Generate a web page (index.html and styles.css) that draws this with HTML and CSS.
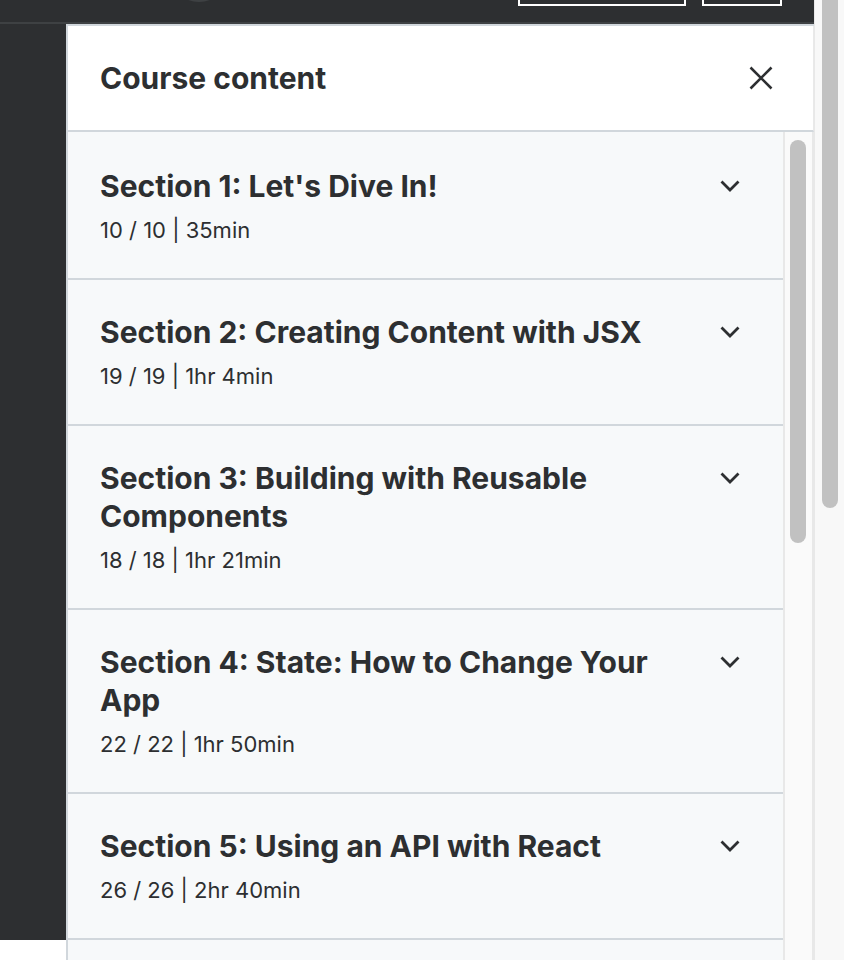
FILE: index.html
```html
<!DOCTYPE html>
<html lang="en">
<head>
<meta charset="utf-8">
<title>Course content</title>
<link rel="stylesheet" href="styles.css">
</head>
<body>
<div class="page">
  <div class="main">
    <header class="topbar">
      <span class="avatar"></span>
      <span class="tb-spacer"></span>
      <span class="tb-btn tb-btn-wide"></span>
      <span class="tb-btn tb-btn-narrow"></span>
    </header>
    <div class="body-row">
      <div class="left-col"></div>
      <aside class="panel">
        <div class="panel-head">
          <h2 class="panel-title">Course content</h2>
          <button class="close" aria-label="Close">
            <svg width="24" height="24" viewBox="0 0 24 24"><path d="M1.5 1.5 L22.5 22.5 M22.5 1.5 L1.5 22.5" stroke="#2d2f31" stroke-width="2.6" fill="none"/></svg>
          </button>
        </div>
        <div class="panel-body">
          <ul class="sections">
            <li class="section">
              <div class="sec-text">
                <h3 class="sec-title">Section 1: Let's Dive In!</h3>
                <div class="sec-meta">10 / 10 | 35min</div>
              </div>
              <svg class="chev" width="20" height="12" viewBox="0 0 20 12"><path d="M1.5 1.5 L10 10 L18.5 1.5" stroke="#2d2f31" stroke-width="2.8" fill="none"/></svg>
            </li>
            <li class="section">
              <div class="sec-text">
                <h3 class="sec-title">Section 2: Creating Content with JSX</h3>
                <div class="sec-meta">19 / 19 | 1hr 4min</div>
              </div>
              <svg class="chev" width="20" height="12" viewBox="0 0 20 12"><path d="M1.5 1.5 L10 10 L18.5 1.5" stroke="#2d2f31" stroke-width="2.8" fill="none"/></svg>
            </li>
            <li class="section">
              <div class="sec-text">
                <h3 class="sec-title">Section 3: Building with Reusable Components</h3>
                <div class="sec-meta">18 / 18 | 1hr 21min</div>
              </div>
              <svg class="chev" width="20" height="12" viewBox="0 0 20 12"><path d="M1.5 1.5 L10 10 L18.5 1.5" stroke="#2d2f31" stroke-width="2.8" fill="none"/></svg>
            </li>
            <li class="section">
              <div class="sec-text">
                <h3 class="sec-title">Section 4: State: How to Change Your App</h3>
                <div class="sec-meta">22 / 22 | 1hr 50min</div>
              </div>
              <svg class="chev" width="20" height="12" viewBox="0 0 20 12"><path d="M1.5 1.5 L10 10 L18.5 1.5" stroke="#2d2f31" stroke-width="2.8" fill="none"/></svg>
            </li>
            <li class="section">
              <div class="sec-text">
                <h3 class="sec-title">Section 5: Using an API with React</h3>
                <div class="sec-meta">26 / 26 | 2hr 40min</div>
              </div>
              <svg class="chev" width="20" height="12" viewBox="0 0 20 12"><path d="M1.5 1.5 L10 10 L18.5 1.5" stroke="#2d2f31" stroke-width="2.8" fill="none"/></svg>
            </li>
            <li class="section section-empty"></li>
          </ul>
          <div class="inner-scroll">
            <div class="inner-thumb"></div>
          </div>
        </div>
      </aside>
    </div>
  </div>
  <div class="page-scroll">
    <div class="page-thumb"></div>
  </div>
</div>
</body>
</html>
```

FILE: styles.css
```css
* { box-sizing: border-box; }
html, body { margin: 0; padding: 0; }
body {
  background: #ffffff;
  font-family: Inter, "Noto Sans", sans-serif;
  color: #2d2f31;
  overflow: hidden;
}
.page {
  display: flex;
  width: 844px;
  height: 960px;
}
.main {
  width: 814px;
  display: flex;
  flex-direction: column;
}
.topbar {
  height: 24px;
  background: #2d2f31;
  border-bottom: 2px solid #3e4143;
  display: flex;
  align-items: flex-end;
  overflow: hidden;
  flex: none;
}
.avatar {
  width: 60px;
  height: 60px;
  border-radius: 50%;
  background: #3e4143;
  margin-left: 169px;
  margin-bottom: 20px;
  flex: none;
}
.tb-spacer { flex: 1; }
.tb-btn {
  height: 40px;
  border: 2px solid #ffffff;
  margin-bottom: 16px;
  flex: none;
}
.tb-btn-wide { width: 168px; }
.tb-btn-narrow { width: 80px; margin-left: 16px; margin-right: 32px; }

.body-row {
  flex: 1;
  display: flex;
  min-height: 0;
}
.left-col {
  width: 66px;
  flex: none;
  background: linear-gradient(#2d2f31 0, #2d2f31 916px, #ffffff 916px);
}
.panel {
  flex: 1;
  display: flex;
  flex-direction: column;
  border-top: 2px solid #d1d7dc;
  border-left: 2px solid #d1d7dc;
  min-height: 0;
}
.panel-head {
  height: 106px;
  background: #ffffff;
  border-bottom: 2px solid #d1d7dc;
  border-right: 1px solid #e9e9e9;
  display: flex;
  align-items: center;
  justify-content: space-between;
  padding: 0 40px 0 32px;
  flex: none;
}
.panel-title {
  margin: 0;
  font-size: 30px;
  font-weight: 700;
}
.close {
  background: none;
  border: 0;
  padding: 0;
  width: 24px;
  height: 24px;
  display: flex;
  align-items: center;
  justify-content: center;
}
.panel-body {
  flex: 1;
  display: flex;
  background: #f7f9fa;
  min-height: 0;
  overflow: hidden;
}
.sections {
  list-style: none;
  margin: 0;
  padding: 0;
  flex: 1;
}
.section {
  display: flex;
  align-items: flex-start;
  gap: 20px;
  padding: 33px 43px 32px 32px;
  border-bottom: 2px solid #d1d7dc;
}
.section:first-child { padding-top: 35px; padding-bottom: 32px; }
.section-empty { height: 80px; border-bottom: 0; }
.sec-text { flex: 1; min-width: 0; }
.sec-title {
  margin: 0;
  font-size: 30px;
  line-height: 38px;
  font-weight: 700;
}
.sec-meta {
  margin-top: 9px;
  font-size: 22px;
  line-height: 32px;
  font-weight: 400;
}
.chev {
  flex: none;
  margin-top: 13px;
}
.inner-scroll {
  width: 31px;
  flex: none;
  background: #fafafa;
  border-left: 2px solid #e8e8e8;
  border-right: 2px solid #e8e8e8;
  padding: 8px 4px 0 4px;
}
.inner-thumb {
  width: 16px;
  height: 403px;
  border-radius: 8px;
  background: #c1c1c1;
  margin-left: 1px;
}
.page-scroll {
  width: 30px;
  flex: none;
  background: #f8f8f8;
  border-left: 1px solid #e8e8e8;
  padding-left: 7px;
}
.page-thumb {
  width: 16px;
  height: 508px;
  background: #c1c1c1;
  border-radius: 0 0 8px 8px;
}
```
